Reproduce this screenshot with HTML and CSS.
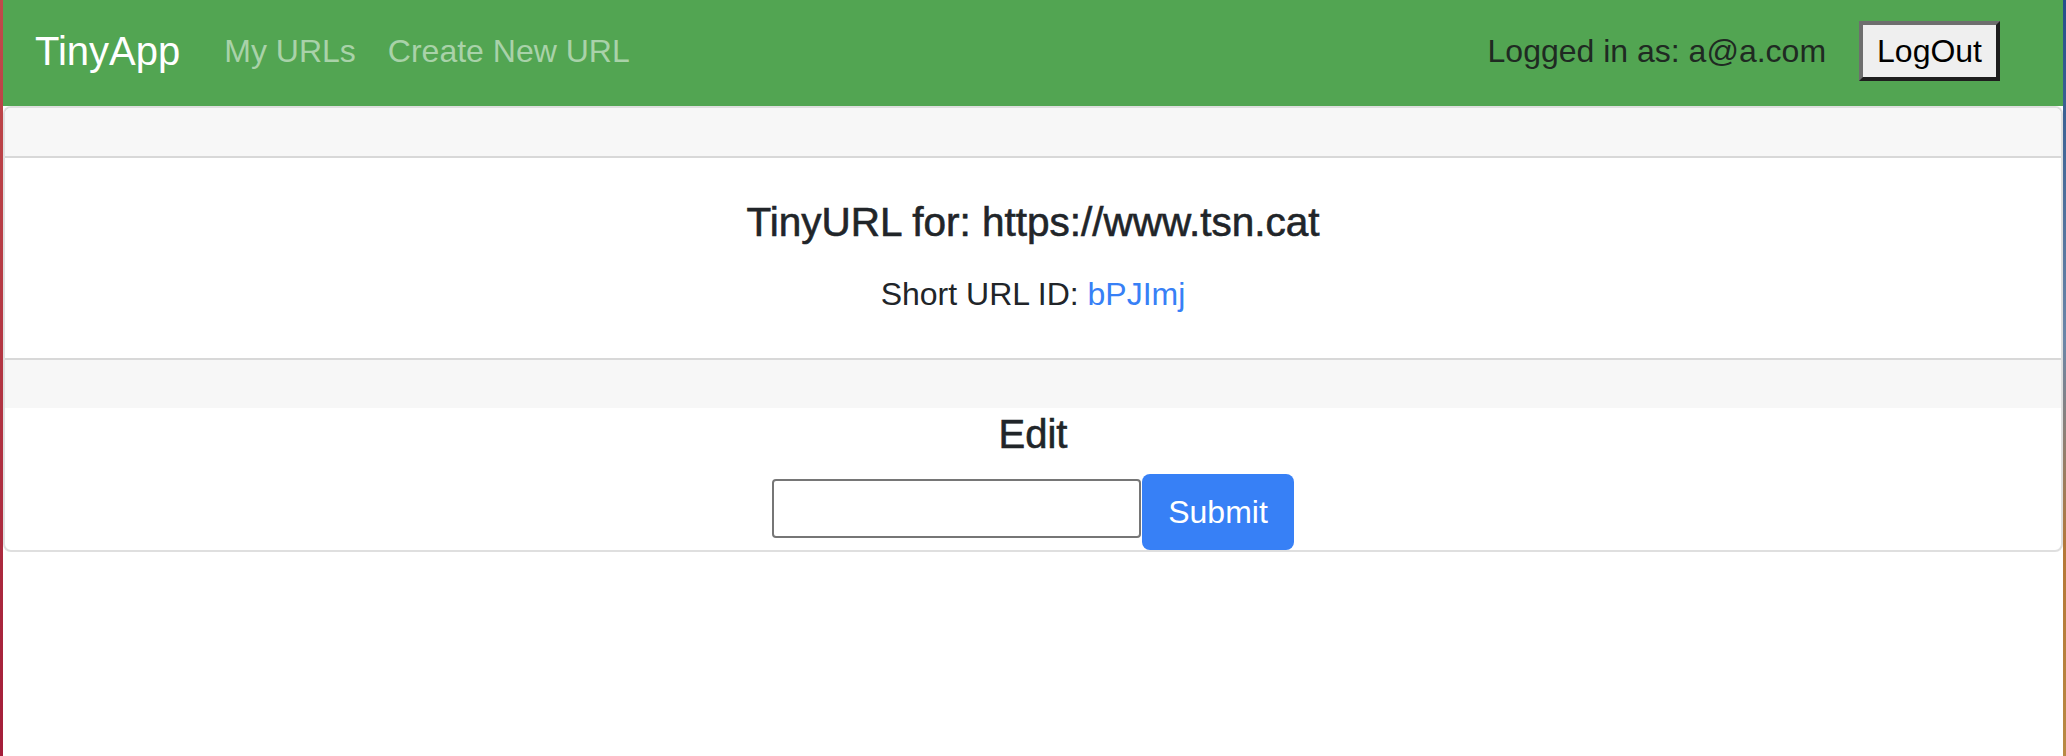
FILE: index.html
```html
<!DOCTYPE html>
<html lang="en">
<head>
<meta charset="utf-8">
<title>TinyApp</title>
<link rel="stylesheet" href="styles.css">
</head>
<body>
<div class="page">
  <nav class="navbar">
    <a class="brand" href="#">TinyApp</a>
    <div class="nav-links">
      <a class="nav-link" href="#">My URLs</a>
      <a class="nav-link" href="#">Create New URL</a>
    </div>
    <div class="nav-right">
      <span class="nav-text">Logged in as: a@a.com</span>
      <form class="logout-form">
        <button type="button" class="logout">LogOut</button>
      </form>
    </div>
  </nav>
  <main class="card">
    <div class="card-header"></div>
    <div class="card-body">
      <h5 class="card-title">TinyURL for: https://www.tsn.cat</h5>
      <p class="card-text">Short URL ID: <a class="link" href="#">bPJImj</a></p>
    </div>
    <div class="card-footer"></div>
    <div class="edit">
      <h5 class="edit-title">Edit</h5>
      <form class="edit-form">
        <input class="url-input" type="text">
        <button type="button" class="btn-primary">Submit</button>
      </form>
    </div>
  </main>
</div>
</body>
</html>
```

FILE: styles.css
```css
html, body {
  margin: 0;
  padding: 0;
}
body {
  min-height: 100vh;
  font-family: "Liberation Sans", Arial, sans-serif;
  font-size: 32px;
  line-height: 48px;
  color: #212529;
  background:
    linear-gradient(to bottom, #c04a4a, #a41e3a) left top / 3px 100% no-repeat,
    linear-gradient(to bottom, #244f8a 0, #6b86a8 45%, #b57838 73%, #b88a45 100%) right top / 3px 100% no-repeat,
    #ffffff;
}
.page {
  margin: 0 3px;
  min-height: 100vh;
  background: #ffffff;
}
.navbar {
  height: 106px;
  box-sizing: border-box;
  padding: 0 32px 5px 32px;
  background: #52a552;
  display: flex;
  align-items: center;
}
.brand {
  font-size: 40px;
  line-height: 60px;
  color: #ffffff;
  text-decoration: none;
  margin-right: 28px;
}
.nav-links {
  display: flex;
}
.nav-link {
  padding: 0 16px;
  color: #a9d2a9;
  text-decoration: none;
}
.nav-right {
  margin-left: auto;
  display: flex;
  align-items: center;
}
.nav-text {
  color: #1f2a22;
  margin-right: 33px;
}
.logout-form {
  margin: 0 31px 0 0;
}
.logout {
  font-family: inherit;
  font-size: 32px;
  line-height: 48px;
  height: 60px;
  box-sizing: border-box;
  padding: 2px 14px;
  background: #efefef;
  color: #000000;
  border: 4px solid;
  border-color: #6e6e6e #1e1e1e #1e1e1e #6e6e6e;
  display: block;
}
.card {
  display: block;
  border: 2px solid rgba(0, 0, 0, 0.125);
  border-radius: 8px;
  overflow: hidden;
  background: #ffffff;
}
.card-header {
  height: 48px;
  background: #f7f7f7;
  border-bottom: 2px solid rgba(0, 0, 0, 0.125);
}
.card-body {
  padding: 40px;
  text-align: center;
}
.card-title {
  margin: 0 0 24px;
  font-size: 40.5px;
  line-height: 48px;
  font-weight: 500;
  -webkit-text-stroke: 0.6px #212529;
}
.card-text {
  margin: 0;
}
.link {
  color: #3780f6;
  text-decoration: none;
}
.card-footer {
  height: 48px;
  background: #f7f7f7;
  border-top: 2px solid rgba(0, 0, 0, 0.125);
}
.edit {
  text-align: center;
}
.edit-title {
  margin: 0 0 16px;
  padding-top: 2px;
  font-size: 40px;
  line-height: 48px;
  font-weight: 500;
  -webkit-text-stroke: 0.6px #212529;
}
.edit-form {
  display: flex;
  justify-content: center;
  align-items: flex-start;
  gap: 1px;
}
.url-input {
  width: 369px;
  height: 59px;
  box-sizing: border-box;
  margin-top: 5px;
  border: 2px solid #767676;
  border-radius: 4px;
  padding: 2px 6px;
  font-family: inherit;
  font-size: 26px;
  background: #ffffff;
}
.btn-primary {
  font-family: inherit;
  font-size: 32px;
  line-height: 48px;
  padding: 14px 26px;
  color: #ffffff;
  background: #3780f6;
  border: 0;
  border-radius: 8px;
}
```
